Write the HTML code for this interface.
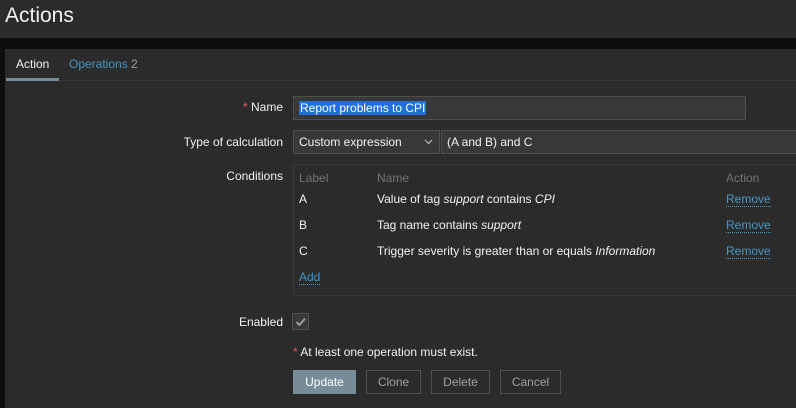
<!DOCTYPE html>
<html><head><style>
body{margin:0;width:796px;height:408px;background:#0e0e0e;font-family:"Liberation Sans",Arial,sans-serif;font-size:12px;color:#f2f2f2;position:relative;overflow:hidden}
.hdr{position:absolute;left:0;top:0;width:796px;height:38px;background:#2b2b2b}
.hdr h1{margin:0;position:absolute;left:5px;top:4px;font-size:21px;font-weight:normal;color:#f2f2f2}
.panel{position:absolute;left:5px;top:49px;width:791px;height:359px;background:#2b2b2b}
.a{position:absolute;white-space:nowrap}
.lbl{position:absolute;right:513px;white-space:nowrap}
.box{position:absolute;background:#383838;border:1px solid #4f4f4f;box-sizing:border-box}
.link{color:#4796c4;border-bottom:1px dotted #4796c4}
.btn{position:absolute;top:370px;height:24px;box-sizing:border-box;border:1px solid #4f4f4f;color:#a0a0a0;text-align:center;line-height:22px;font-size:12px}
</style></head><body>
<div class="hdr"><h1>Actions</h1></div>
<div class="panel"></div>
<div class="a" style="left:16px;top:57px;color:#f2f2f2">Action</div>
<div class="a" style="left:69px;top:57px;color:#4796c4">Operations <span style="color:#a0a0a0">2</span></div>
<div class="a" style="left:6px;top:80px;width:790px;height:1px;background:#383838"></div>
<div class="a" style="left:6px;top:78px;width:53px;height:3px;background:#768d99"></div>

<div class="lbl" style="top:100px"><span style="color:#e45959">*</span> Name</div>
<div class="box" style="left:293px;top:96px;width:453px;height:24px"><span class="a" style="left:5px;top:4px;background:#1f6fd6;color:#fff;padding:0 1px">Report problems to CPI</span></div>

<div class="lbl" style="top:135px">Type of calculation</div>
<div class="box" style="left:293px;top:130px;width:147px;height:24px"><span class="a" style="left:5px;top:4px">Custom expression</span><svg class="a" style="left:130px;top:8px" width="9" height="6"><path d="M1 1 L4.5 4.5 L8 1" stroke="#bbb" stroke-width="1.2" fill="none"/></svg></div>
<div class="box" style="left:441px;top:130px;width:360px;height:24px"><span class="a" style="left:5px;top:4px">(A and B) and C</span></div>

<div class="lbl" style="top:169px">Conditions</div>
<div class="box" style="left:293px;top:164px;width:510px;height:132px;background:#2b2b2b;border-color:#383838"></div>
<div class="a" style="left:299px;top:171px;color:#737373">Label</div>
<div class="a" style="left:377px;top:171px;color:#737373">Name</div>
<div class="a" style="left:726px;top:171px;color:#737373">Action</div>
<div class="a" style="left:299px;top:192px">A</div>
<div class="a" style="left:377px;top:192px">Value of tag <i>support</i> contains <i>CPI</i></div>
<div class="a" style="left:726px;top:192px"><span class="link">Remove</span></div>
<div class="a" style="left:299px;top:218px">B</div>
<div class="a" style="left:377px;top:218px">Tag name contains <i>support</i></div>
<div class="a" style="left:726px;top:218px"><span class="link">Remove</span></div>
<div class="a" style="left:299px;top:244px">C</div>
<div class="a" style="left:377px;top:244px">Trigger severity is greater than or equals <i>Information</i></div>
<div class="a" style="left:726px;top:244px"><span class="link">Remove</span></div>
<div class="a" style="left:299px;top:270px"><span class="link">Add</span></div>

<div class="lbl" style="top:315px">Enabled</div>
<div class="box" style="left:292px;top:313px;width:17px;height:17px;background:#383838;border-color:#4f4f4f"><svg width="15" height="15" style="position:absolute;left:0;top:0"><path d="M3.5 8 L6.5 11 L12 4.5" stroke="#a0a0a0" stroke-width="1.8" fill="none"/></svg></div>

<div class="a" style="left:293px;top:345px"><span style="color:#e45959">*</span> At least one operation must exist.</div>

<div class="btn" style="left:293px;width:63px;background:#768d99;border-color:#768d99;color:#fff">Update</div>
<div class="btn" style="left:366px;width:55px">Clone</div>
<div class="btn" style="left:431px;width:59px">Delete</div>
<div class="btn" style="left:500px;width:61px">Cancel</div>
</body></html>
